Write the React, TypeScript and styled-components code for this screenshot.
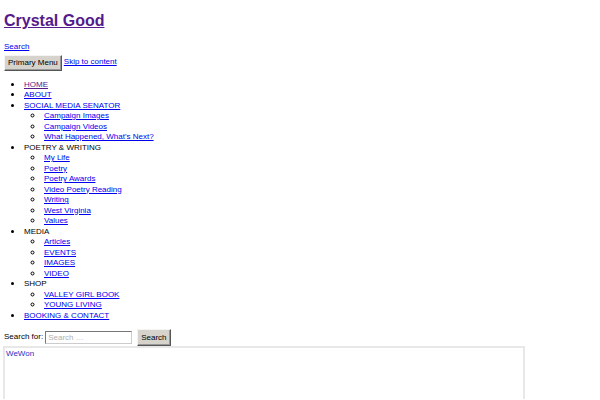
import React from "react";
import styled, { createGlobalStyle } from "styled-components";

const GlobalStyle = createGlobalStyle`
  html, body {
    margin: 0;
    padding: 0;
    background: #fff;
  }
  body {
    font-family: "Liberation Sans", Arial, sans-serif;
    font-size: 8px;
    line-height: 10.5px;
    color: #000;
  }
`;

const Page = styled.div`
  padding: 0 4px;
  display: flex;
  flex-direction: column;
`;

const SiteTitle = styled.h1`
  margin: 10px 0 0 0;
  font-size: 16px;
  line-height: 21px;
  font-weight: 700;
`;

const Link = styled.a<{ $visited?: boolean }>`
  color: ${({ $visited }) => ($visited ? "#551a8b" : "#0000ee")};
  text-decoration: underline;
  cursor: pointer;
`;

const SearchToggle = styled.div`
  margin-top: 11px;
`;

const NavBar = styled.div`
  display: flex;
  align-items: center;
  gap: 2px;
  margin-top: 2px;
`;

const OldButton = styled.button<{ $tall?: boolean }>`
  font-family: "Liberation Sans", Arial, sans-serif;
  font-size: 8px;
  height: ${({ $tall }) => ($tall ? "17px" : "16px")};
  padding: 0 3px;
  background: #d6d3cc;
  color: #000;
  border: 1px solid;
  border-color: #f4f4f4 #555 #555 #f4f4f4;
  box-shadow: inset -1px -1px 0 #999;
  border-radius: 0;
`;

const Menu = styled.ul<{ $sub?: boolean }>`
  margin: ${({ $sub }) => ($sub ? "0" : "9px 0 0 0")};
  padding-left: 20px;
  list-style: ${({ $sub }) => ($sub ? "circle" : "disc")};
`;

const Entry = styled.li`
  font-size: 10px;
  line-height: 10.5px;
`;

const EntryText = styled.span`
  font-size: 8px;
  line-height: 10.5px;
  vertical-align: top;
`;

const SearchForm = styled.form`
  display: flex;
  align-items: center;
  margin-top: 8px;
`;

const Label = styled.label`
  margin-right: 2px;
`;

const SearchInput = styled.input`
  width: 87px;
  height: 13px;
  box-sizing: border-box;
  font-family: "Liberation Sans", Arial, sans-serif;
  font-size: 8px;
  padding: 0 2px;
  border: 1px solid;
  border-color: #777 #ccc #ccc #777;
  margin-right: 5px;
  &::placeholder {
    color: #b0b0b0;
  }
`;

const Frame = styled.div`
  margin-left: -1px;
  width: 517px;
  height: 50px;
  border: 2px solid #e8e8e8;
  border-bottom: none;
  padding: 1px 0 0 1px;
  color: #2d2dc8;
`;

type Item = { label: string; href?: boolean; visited?: boolean; children?: Item[] };

const menu: Item[] = [
  { label: "HOME", href: true, visited: true },
  { label: "ABOUT", href: true },
  {
    label: "SOCIAL MEDIA SENATOR",
    href: true,
    children: [
      { label: "Campaign Images", href: true },
      { label: "Campaign Videos", href: true },
      { label: "What Happened, What's Next?", href: true },
    ],
  },
  {
    label: "POETRY & WRITING",
    children: [
      { label: "My Life", href: true },
      { label: "Poetry", href: true },
      { label: "Poetry Awards", href: true },
      { label: "Video Poetry Reading", href: true },
      { label: "Writing", href: true },
      { label: "West Virginia", href: true },
      { label: "Values", href: true },
    ],
  },
  {
    label: "MEDIA",
    children: [
      { label: "Articles", href: true },
      { label: "EVENTS", href: true },
      { label: "IMAGES", href: true },
      { label: "VIDEO", href: true },
    ],
  },
  {
    label: "SHOP",
    children: [
      { label: "VALLEY GIRL BOOK", href: true },
      { label: "YOUNG LIVING", href: true },
    ],
  },
  { label: "BOOKING & CONTACT", href: true },
];

function MenuItem({ item }: { item: Item }) {
  return (
    <Entry>
      <EntryText>
        {item.href ? <Link $visited={item.visited}>{item.label}</Link> : item.label}
      </EntryText>
      {item.children && (
        <Menu $sub>
          {item.children.map((c) => (
            <MenuItem key={c.label} item={c} />
          ))}
        </Menu>
      )}
    </Entry>
  );
}

export default function App() {
  return (
    <Page>
      <GlobalStyle />
      <SiteTitle>
        <Link $visited>Crystal Good</Link>
      </SiteTitle>
      <SearchToggle>
        <Link>Search</Link>
      </SearchToggle>
      <NavBar>
        <OldButton>Primary Menu</OldButton>
        <Link>Skip to content</Link>
      </NavBar>
      <Menu>
        {menu.map((m) => (
          <MenuItem key={m.label} item={m} />
        ))}
      </Menu>
      <SearchForm onSubmit={(e) => e.preventDefault()}>
        <Label>Search for:</Label>
        <SearchInput placeholder="Search …" />
        <OldButton $tall>Search</OldButton>
      </SearchForm>
      <Frame>WeWon</Frame>
    </Page>
  );
}
